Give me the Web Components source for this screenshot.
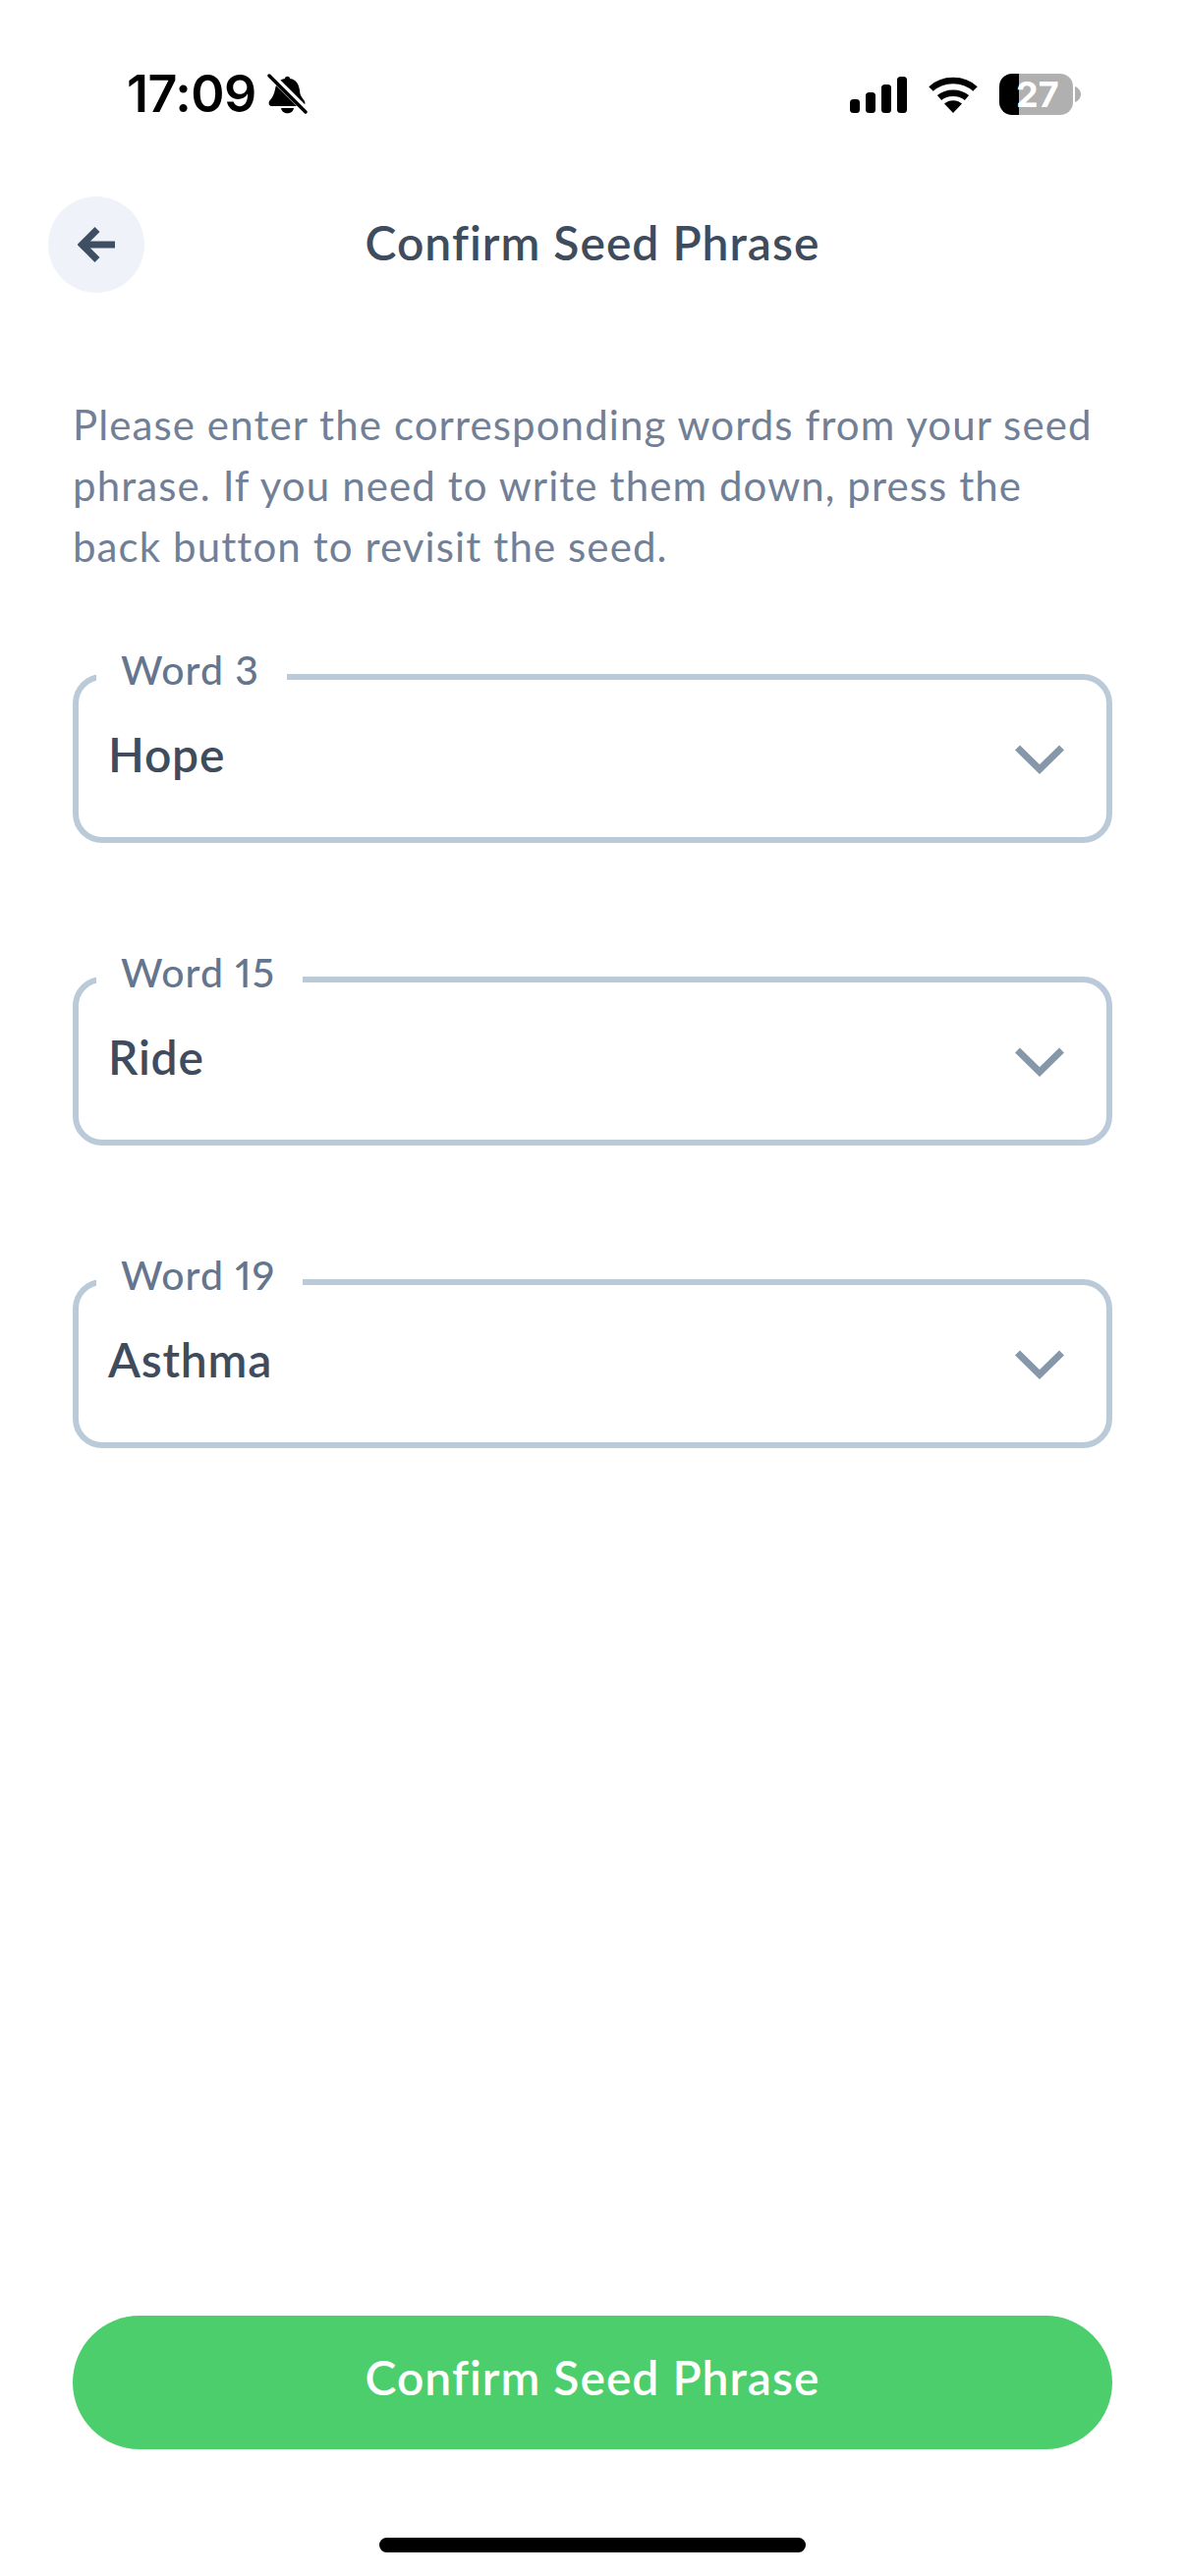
<!DOCTYPE html>
<html>
<head>
<meta charset="utf-8">
<title>Confirm Seed Phrase</title>
<style>
  html, body { margin: 0; background: #fff; }
  body { font-family: Lato, "Liberation Sans", sans-serif; }
</style>
</head>
<body>
<seed-screen>
  <status-bar slot="status"></status-bar>
  <nav-header slot="nav" title="Confirm Seed Phrase"></nav-header>
  <p slot="intro">Please enter the corresponding words from your seed phrase. If you need to write them down, press the back button to revisit the seed.</p>
  <word-select label="Word 3" value="Hope"></word-select>
  <word-select label="Word 15" value="Ride"></word-select>
  <word-select label="Word 19" value="Asthma"></word-select>
  <green-button slot="action">Confirm Seed Phrase</green-button>
</seed-screen>

<script>
class SeedScreen extends HTMLElement {
  constructor() {
    super();
    this.attachShadow({ mode: "open" });
    this.shadowRoot.innerHTML = `
<style>
:host { display: flex; flex-direction: column; width: 1206px; height: 2622px; background: #fff; overflow: hidden; }
.intro { padding: 0 74px; margin-top: 95px; }
::slotted(p) { margin: 0; width: 1050px; font-size: 42px; line-height: 62px; color: #718096; letter-spacing: 1.1px; }
.fields { display: flex; flex-direction: column; gap: 106px; padding: 0 74px; margin-top: 69px; }
.grow { flex: 1; }
.action { padding: 0 74px; }
.home { height: 129px; display: flex; justify-content: center; padding-top: 90px; box-sizing: border-box; }
.home div { width: 434px; height: 15px; border-radius: 8px; background: #000; }
</style>
<slot name="status"></slot>
<slot name="nav"></slot>
<div class="intro"><slot name="intro"></slot></div>
<div class="fields"><slot></slot></div>
<div class="grow"></div>
<div class="action"><slot name="action"></slot></div>
<div class="home"><div></div></div>`;
  }
}

class StatusBar extends HTMLElement {
  constructor() {
    super();
    this.attachShadow({ mode: "open" });
    this.shadowRoot.innerHTML = `
<style>
:host { display: flex; align-items: center; height: 192px; box-sizing: border-box; padding: 0 106px 0 129px; font-family: Inter, sans-serif; color: #000; }
.time { font-size: 52px; font-weight: 600; letter-spacing: -0.5px; line-height: 52px; }
.bell { margin-left: 10px; }
.grow { flex: 1; }
.right { display: flex; align-items: center; }
.wifi { margin-left: 22px; }
.batt { margin-left: 22px; width: 75px; height: 42px; border-radius: 13px; background: linear-gradient(90deg, #000 0 20px, #b0b0b0 20px); color: #fff; font-size: 36px; font-weight: 700; line-height: 42px; box-sizing: border-box; padding-left: 17px; }
.nub { margin-left: 2px; }
</style>
<span class="time">17:09</span>
<svg class="bell" width="42" height="44" viewBox="0 0 42 44">
  <path fill="#000" d="M19 6c0-3 5-3 5 0 7 1 9 6 10 12 0 5 3 8 5 11 1 3 0 5-3 5H6c-3 0-4-2-3-5 3-3 5-7 6-12 1-6 4-10 10-11z"/>
  <path fill="#000" d="M15 36h13c-1 7-12 7-13 0z"/>
  <path stroke="#fff" stroke-width="7" d="M2 0l38 38"/>
  <path stroke="#000" stroke-width="3.4" stroke-linecap="round" d="M3 3l37 37"/>
</svg>
<span class="grow"></span>
<span class="right">
<svg width="58" height="37" viewBox="0 0 58 37" fill="#000">
  <rect x="0" y="23" width="10" height="14" rx="3.5"/>
  <rect x="16" y="16" width="10" height="21" rx="3.5"/>
  <rect x="32" y="8" width="10" height="29" rx="3.5"/>
  <rect x="48" y="0" width="10" height="37" rx="3.5"/>
</svg>
<svg class="wifi" width="50" height="37" viewBox="0 0 50 37" fill="none" stroke="#000" stroke-width="6.5">
  <path d="M2.5 12.5c12-11.5 33-11.5 45 0"/>
  <path d="M11 21.5c7.500-6.500 20.500-6.500 28 0"/>
  <path fill="#000" stroke="none" d="M25 37l-9-9.500c5-4.500 13-4.500 18 0z"/>
</svg>
<span class="batt">27</span>
<svg class="nub" width="6" height="16" viewBox="0 0 6 16"><path fill="#b0b0b0" d="M0 0c3 1 6 4 6 8s-3 7-6 8z"/></svg>
</span>`;
  }
}

class NavHeader extends HTMLElement {
  constructor() {
    super();
    this.attachShadow({ mode: "open" });
    this.shadowRoot.innerHTML = `
<style>
:host { display: grid; grid-template-columns: 98px 1fr 98px; align-items: center; height: 114px; padding: 0 49px; box-sizing: content-box; width: 1108px; }
.back { width: 98px; height: 98px; border-radius: 50%; background: #eff2f8; display: flex; align-items: center; justify-content: center; }
h1 { margin: 0 0 6px; text-align: center; font-size: 48px; font-weight: 600; color: #3e4c5e; letter-spacing: 1px; }
</style>
<div class="back">
  <svg width="38" height="36" viewBox="0 0 38 36" fill="none" stroke="#3e4f64" stroke-width="7">
    <path d="M38 18H4"/><path d="M20 2.500L4.500 18 20 33.500"/>
  </svg>
</div>
<h1></h1>
<span></span>`;
    this.shadowRoot.querySelector("h1").textContent = this.getAttribute("title");
    this.removeAttribute("title");
  }
}

class WordSelect extends HTMLElement {
  constructor() {
    super();
    this.attachShadow({ mode: "open" });
    this.shadowRoot.innerHTML = `
<style>
:host { display: block; }
fieldset { margin: 0; padding: 0; border: 6px solid #bacad9; border-radius: 30px; height: 202px; box-sizing: border-box; min-width: 0; }
legend { margin-left: 18px; padding: 0 28px 14px 25px; font-size: 41px; line-height: 52px; font-weight: 500; color: #65758d; letter-spacing: 1px; font-variant-numeric: proportional-nums; }
.row { display: flex; align-items: center; justify-content: space-between; height: 90px; padding: 0 43px 0 30px; }
.value { font-size: 48px; font-weight: 600; color: #3e4c5e; letter-spacing: 0.8px; }
svg { margin-top: 12px; }
</style>
<fieldset>
  <legend></legend>
  <div class="row">
    <span class="value"></span>
    <svg width="50" height="30" viewBox="0 0 50 30" fill="none" stroke="#8597a8" stroke-width="7">
      <path d="M2.500 3L25 25 47.500 3"/>
    </svg>
  </div>
</fieldset>`;
    this.shadowRoot.querySelector("legend").textContent = this.getAttribute("label");
    this.shadowRoot.querySelector(".value").textContent = this.getAttribute("value");
  }
}

class GreenButton extends HTMLElement {
  constructor() {
    super();
    this.attachShadow({ mode: "open" });
    this.shadowRoot.innerHTML = `
<style>
:host { display: flex; align-items: center; justify-content: center; height: 136px; box-sizing: border-box; padding-bottom: 11px; border-radius: 68px; background: #4bce6b; color: #fff; font-size: 48px; font-weight: 600; letter-spacing: 1px; }
</style>
<slot></slot>`;
  }
}

customElements.define("seed-screen", SeedScreen);
customElements.define("status-bar", StatusBar);
customElements.define("nav-header", NavHeader);
customElements.define("word-select", WordSelect);
customElements.define("green-button", GreenButton);
</script>
</body>
</html>
